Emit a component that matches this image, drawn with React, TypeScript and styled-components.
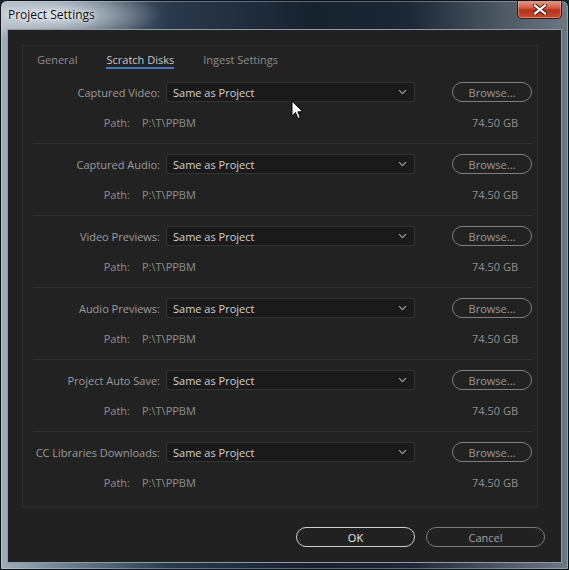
import * as React from "react";
import styled, {createGlobalStyle} from "styled-components";

const Global = createGlobalStyle`
  html, body {
    margin: 0;
    padding: 0;
    background: #1b2530;
  }
  body {
    font-family: "Open Sans", "Noto Sans", "DejaVu Sans", sans-serif;
  }
`

const Window = styled.div`
  position: relative;
  width: 569px;
  height: 570px;
  box-sizing: border-box;
  display: flex;
  flex-direction: column;
  border: 1px solid #0e1319;
  border-radius: 7px 7px 2px 2px;
  background:
    radial-gradient(ellipse 110px 26px at 50px 14px, rgba(225,232,238,0.9), rgba(225,232,238,0) 100%),
    linear-gradient(90deg, #9fadb9 0%, #6d7e8c 12%, #2a394a 30%, #17222f 55%, #1c2835 72%, #4b5864 88%, #6c7883 100%);
  box-shadow: inset 0 0 0 1px rgba(220,230,240,0.35);
  overflow: hidden;
`

const TitleBar = styled.div`
  height: 28px;
  flex: none;
  display: flex;
  align-items: center;
  justify-content: space-between;
  padding-left: 7px;
`

const Title = styled.span`
  font-family: "Open Sans", "Noto Sans", sans-serif;
  font-size: 12px;
  color: #0a0a0a;
  text-shadow: 0 0 6px rgba(255,255,255,0.9), 0 0 2px rgba(255,255,255,0.8);
  margin-top: -2px;
`

const CloseButton = styled.div`
  align-self: flex-start;
  width: 45px;
  height: 19px;
  margin-right: 6px;
  margin-top: -1px;
  box-sizing: border-box;
  border: 1px solid #3a1a14;
  border-top: none;
  border-radius: 0 0 5px 5px;
  background: linear-gradient(180deg, #e6a595 0%, #cf5a3f 45%, #b5321a 55%, #c8492d 100%);
  box-shadow: inset 0 0 0 1px rgba(255,200,190,0.45);
  display: flex;
  align-items: center;
  justify-content: center;
`

const Client = styled.div`
  flex: 1;
  margin: 0 6px 6px 6px;
  border: 1px solid #8e9aa4;
  background: #212121;
  display: flex;
  flex-direction: column;
  padding: 15px 0 0 14px;
`

const Panel = styled.div`
  width: 516px;
  height: 463px;
  box-sizing: border-box;
  border: 1px solid #2d2d2d;
  background: #222222;
  padding: 5px 5px 2px 10px;
  display: flex;
  flex-direction: column;
`

const Tabs = styled.div`
  display: flex;
  gap: 29px;
  padding-left: 4px;
`

const Tab = styled.div<{ $active?: boolean }>`
  font-size: 11px;
  line-height: 15px;
  padding-top: 1px;
  color: ${p => p.$active ? "#c8c8c8" : "#8e8e8e"};
  border-bottom: 2px solid ${p => p.$active ? "#3f76b8" : "transparent"};
`

const Sections = styled.div`
  margin-top: 3px;
  display: flex;
  flex-direction: column;
`

const Section = styled.div<{ $last?: boolean }>`
  padding: 10px 0 11px;
  border-bottom: 1px solid ${p => p.$last ? "transparent" : "#313131"};
  display: flex;
  flex-direction: column;
  gap: 10px;
`

const TopRow = styled.div`
  display: grid;
  grid-template-columns: 127px 249px 1fr 80px;
  column-gap: 6px;
  align-items: center;
  height: 20px;
`

const Label = styled.div`
  text-align: right;
  font-size: 11px;
  color: #9b9b9b;
  white-space: nowrap;
`

const Dropdown = styled.div`
  height: 20px;
  box-sizing: border-box;
  border: 1px solid #333333;
  border-radius: 2px;
  background: #1a1a1a;
  display: flex;
  align-items: center;
  justify-content: space-between;
  padding: 0 7px 0 6px;
  font-size: 11px;
  color: #d2d2d2;
`

const Browse = styled.div`
  grid-column: 4;
  height: 20px;
  box-sizing: border-box;
  border: 1px solid #7e7e7e;
  border-radius: 10px;
  display: flex;
  align-items: center;
  justify-content: center;
  font-size: 11px;
  color: #9a9a9a;
`

const PathRow = styled.div`
  display: grid;
  grid-template-columns: 97px 1fr auto;
  column-gap: 12px;
  align-items: center;
  height: 20px;
  padding-right: 14px;
  font-size: 11px;
  color: #8f8f8f;
`

const PathLabel = styled.span`
  text-align: right;
`

const Footer = styled.div`
  display: flex;
  justify-content: flex-end;
  gap: 11px;
  padding: 19px 16px 0 0;
`

const DialogButton = styled.div<{ $primary?: boolean }>`
  width: 119px;
  height: 20px;
  box-sizing: border-box;
  border: 1px solid ${p => p.$primary ? "#cfcfcf" : "#7c7c7c"};
  border-radius: 10px;
  display: flex;
  align-items: center;
  justify-content: center;
  font-size: 11px;
  color: ${p => p.$primary ? "#ececec" : "#a3a3a3"};
`

const Cursor = styled.svg`
  position: absolute;
  left: 290px;
  top: 99px;
`

const disks = [
    "Captured Video:",
    "Captured Audio:",
    "Video Previews:",
    "Audio Previews:",
    "Project Auto Save:",
    "CC Libraries Downloads:",
]

function Chevron() {
    return (
        <svg width="9" height="6" viewBox="0 0 9 6">
            <path d="M1 1.2 L4.5 4.6 L8 1.2" fill="none" stroke="#a8a8a8" strokeWidth="1.1"/>
        </svg>
    )
}

export default function App() {
    return (
        <>
            <Global/>
            <Window>
                <TitleBar>
                    <Title>Project Settings</Title>
                    <CloseButton>
                        <svg width="14" height="11" viewBox="0 0 14 11">
                            <path d="M2 1.5 L12 9.5 M12 1.5 L2 9.5" stroke="#4a1a10" strokeWidth="4" strokeLinecap="square"/>
                            <path d="M2 1.5 L12 9.5 M12 1.5 L2 9.5" stroke="#ffffff" strokeWidth="2.2" strokeLinecap="square"/>
                        </svg>
                    </CloseButton>
                </TitleBar>
                <Client>
                    <Panel>
                        <Tabs>
                            <Tab>General</Tab>
                            <Tab $active>Scratch Disks</Tab>
                            <Tab>Ingest Settings</Tab>
                        </Tabs>
                        <Sections>
                            {disks.map((d, i) => (
                                <Section key={d} $last={i === disks.length - 1}>
                                    <TopRow>
                                        <Label>{d}</Label>
                                        <Dropdown>
                                            <span>Same as Project</span>
                                            <Chevron/>
                                        </Dropdown>
                                        <Browse>Browse...</Browse>
                                    </TopRow>
                                    <PathRow>
                                        <PathLabel>Path:</PathLabel>
                                        <span>P:\T\PPBM</span>
                                        <span>74.50 GB</span>
                                    </PathRow>
                                </Section>
                            ))}
                        </Sections>
                    </Panel>
                    <Footer>
                        <DialogButton $primary>OK</DialogButton>
                        <DialogButton>Cancel</DialogButton>
                    </Footer>
                </Client>
                <Cursor width="13" height="20" viewBox="0 0 13 20">
                    <path d="M1 1 L1 16 L4.5 12.5 L7 18.5 L9.3 17.5 L6.9 11.8 L11.8 11.8 Z" fill="#ffffff" stroke="#000000" strokeWidth="1" strokeLinejoin="round"/>
                </Cursor>
            </Window>
        </>
    )
}
